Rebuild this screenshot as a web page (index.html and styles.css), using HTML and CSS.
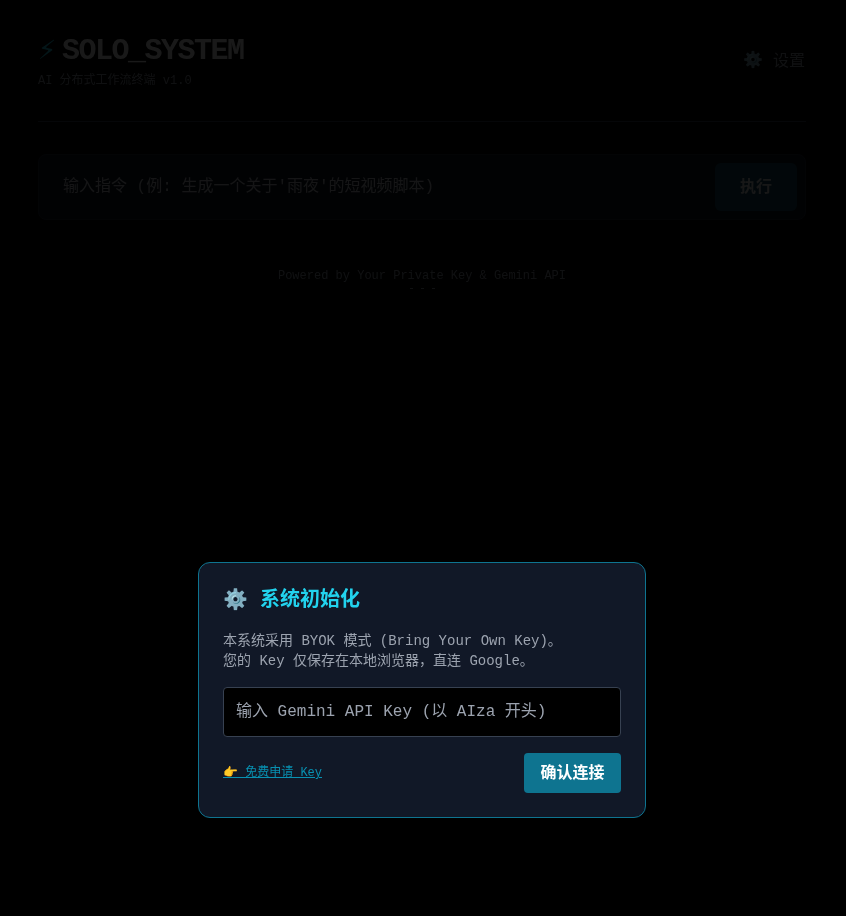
FILE: index.html
```html
<!DOCTYPE html>
<html lang="zh">
<head>
    <meta charset="UTF-8">
    <meta name="viewport" content="width=device-width, initial-scale=1.0">
    <title>SOLO_SYSTEM</title>
    <link rel="stylesheet" href="styles.css">
</head>
<body>
    <div class="page">
        <header class="header">
            <div>
                <h1 class="logo"><span class="bolt">⚡</span><span>SOLO_SYSTEM</span></h1>
                <p class="subtitle">AI 分布式工作流终端 v1.0</p>
            </div>
            <button class="settings"><span class="settings-icon">⚙️</span><span>设置</span></button>
        </header>

        <div class="command">
            <input class="command-input" type="text" placeholder="输入指令 (例: 生成一个关于'雨夜'的短视频脚本)">
            <button class="run">执行</button>
        </div>

        <footer class="footer">
            <div>Powered by Your Private Key &amp; Gemini API</div>
            <div class="dots"><span></span><span></span><span></span></div>
        </footer>
    </div>

    <div class="overlay">
        <div class="modal">
            <h2 class="modal-title"><span class="modal-icon">⚙️</span><span>系统初始化</span></h2>
            <p class="modal-text">本系统采用 BYOK 模式 (Bring Your Own Key)。<br>您的 Key 仅保存在本地浏览器，直连 Google。</p>
            <input class="key-input" type="text" placeholder="输入 Gemini API Key (以 AIza 开头)">
            <div class="modal-actions">
                <a class="key-link" href="#">👉 免费申请 Key</a>
                <button class="confirm">确认连接</button>
            </div>
        </div>
    </div>
</body>
</html>
```

FILE: styles.css
```css
* {
    box-sizing: border-box;
}
html, body {
    height: 100%;
}
body {
    margin: 0;
    background-color: #000;
    color: #e5e7eb;
    font-family: "Liberation Mono", "Noto Sans CJK SC", monospace;
}
.page {
    width: 768px;
    margin-left: 38px;
    padding-top: 33px;
    will-change: transform;
}
.header {
    display: flex;
    justify-content: space-between;
    align-items: center;
    padding-bottom: 32px;
    border-bottom: 1px solid #374151;
    margin-bottom: 32px;
}
.logo {
    margin: 0;
    display: flex;
    align-items: center;
    gap: 8px;
    font-size: 30px;
    line-height: 36px;
    letter-spacing: -1.5px;
    color: #fff;
}
.bolt {
    color: #22d3ee;
    letter-spacing: 0;
    width: 16px;
}
.subtitle {
    margin: 4px 0 0;
    font-size: 12px;
    line-height: 16px;
    color: #9ca3af;
}
.settings {
    display: flex;
    align-items: center;
    gap: 10px;
    padding: 0 1px 0 0;
    margin-bottom: 4px;
    background: none;
    border: none;
    color: #9ca3af;
    font-family: inherit;
    font-size: 16px;
}
.settings-icon {
    margin-top: 2px;
    font-size: 16px;
}
.command {
    display: flex;
    gap: 8px;
    padding: 8px;
    background-color: #111827;
    border: 1px solid #1f2937;
    border-radius: 8px;
}
.command-input {
    flex: 1;
    padding: 0 16px;
    background: none;
    border: none;
    outline: none;
    font-family: inherit;
    font-size: 16px;
}
.command-input::placeholder {
    color: #d1d5db;
}
.run {
    width: 82px;
    height: 48px;
    padding: 0 0 5px;
    background-color: #164e63;
    color: #e5e7eb;
    border: none;
    border-radius: 6px;
    font-family: inherit;
    font-size: 16px;
    font-weight: bold;
}
.footer {
    margin-top: 48px;
    text-align: center;
    font-size: 12px;
    line-height: 16px;
    color: #9ca3af;
}
.dots {
    display: flex;
    justify-content: center;
    gap: 8px;
    margin-top: 4px;
}
.dots span {
    width: 3px;
    height: 1px;
    background-color: #9ca3af;
}
.overlay {
    position: fixed;
    inset: 0;
    display: flex;
    justify-content: center;
    align-items: flex-end;
    padding: 0 2px 98px 0;
    background-color: rgba(0, 0, 0, 0.9);
}
.modal {
    width: 448px;
    padding: 24px;
    background-color: #111827;
    border: 1px solid #0e7490;
    border-radius: 12px;
    will-change: transform;
}
.modal-title {
    display: flex;
    align-items: center;
    gap: 12px;
    margin: 0 0 16px;
    font-size: 20px;
    line-height: 28px;
    color: #22d3ee;
}
.modal-icon {
    font-size: 20px;
}
.modal-text {
    margin: 0 0 16px;
    font-size: 14px;
    line-height: 20px;
    color: #9ca3af;
}
.key-input {
    display: block;
    width: 100%;
    height: 50px;
    padding: 0 12px;
    background-color: #000;
    border: 1px solid #374151;
    border-radius: 4px;
    outline: none;
    font-family: inherit;
    font-size: 16px;
}
.key-input::placeholder {
    color: #9ca3af;
}
.modal-actions {
    display: flex;
    justify-content: space-between;
    align-items: center;
    margin-top: 16px;
}
.key-link {
    margin-bottom: 4px;
    font-size: 12px;
    color: #0891b2;
}
.confirm {
    width: 97px;
    height: 40px;
    padding: 0 0 4px;
    background-color: #0e7490;
    color: #fff;
    border: none;
    border-radius: 4px;
    font-family: inherit;
    font-size: 16px;
    font-weight: bold;
}
```
